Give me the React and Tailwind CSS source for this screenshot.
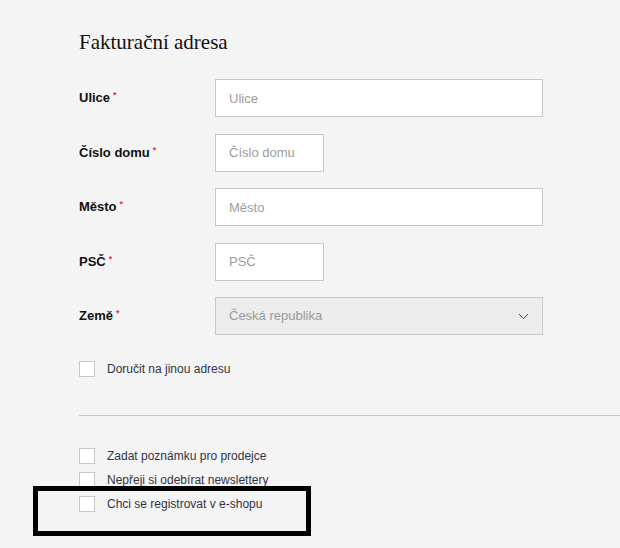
import React from "react";
import { ChevronDown } from "lucide-react";

const fields = [
  { label: "Ulice", placeholder: "Ulice", width: "w-[328px]" },
  { label: "Číslo domu", placeholder: "Číslo domu", width: "w-[109px]" },
  { label: "Město", placeholder: "Město", width: "w-[328px]" },
  { label: "PSČ", placeholder: "PSČ", width: "w-[109px]" },
];

function Label({ children }) {
  return (
    <div className="w-[136px] shrink-0 text-[13px] font-bold text-[#111]">
      {children}
      <span className="relative -top-[4px] ml-[3px] text-[9px] text-[#e8305a]">*</span>
    </div>
  );
}

function Check({ children }) {
  return (
    <label className="flex h-[18px] items-center gap-[12px] text-[12px] text-[#333344]">
      <span className="h-[16px] w-[16px] shrink-0 border border-[#c8c8c8] bg-white" />
      {children}
    </label>
  );
}

export default function App() {
  return (
    <div
      className="relative min-h-[548px] overflow-hidden bg-[#f4f4f4] pl-[79px] pt-[28px]"
      style={{ fontFamily: '"Liberation Sans", Arial, sans-serif' }}
    >
      <h2
        className="text-[21px] leading-[28px] text-[#111]"
        style={{ fontFamily: '"Liberation Serif", "Times New Roman", serif' }}
      >
        Fakturační adresa
      </h2>

      <div className="mt-[23px] flex flex-col gap-[16.5px]">
        {fields.map((f) => (
          <div key={f.label} className="flex h-[38px] items-center">
            <Label>{f.label}</Label>
            <input
              placeholder={f.placeholder}
              className={`${f.width} h-[38px] border border-[#c8c8c8] bg-white px-[13px] text-[13px] text-[#333] outline-none placeholder:text-[#9b9b9b]`}
            />
          </div>
        ))}
        <div className="flex h-[38px] items-center">
          <Label>Země</Label>
          <div className="flex h-[38px] w-[328px] items-center justify-between border border-[#c8c8c8] bg-[#ececec] pl-[13px] pr-[10px] text-[13px] text-[#9b9b9b]">
            <span>Česká republika</span>
            <ChevronDown size={17} strokeWidth={1.4} className="text-[#444]" />
          </div>
        </div>
      </div>

      <div className="mt-[25px]">
        <Check>Doručit na jinou adresu</Check>
      </div>

      <div className="mt-[37px] h-px bg-[#c8c8c8]" />

      <div className="mt-[31px] flex flex-col gap-[6px]">
        <Check>Zadat poznámku pro prodejce</Check>
        <Check>Nepřeji si odebírat newslettery</Check>
        <Check>Chci se registrovat v e-shopu</Check>
      </div>

      <div className="absolute left-[33px] top-[486px] h-[50px] w-[278px] border-[5px] border-black" />
    </div>
  );
}
